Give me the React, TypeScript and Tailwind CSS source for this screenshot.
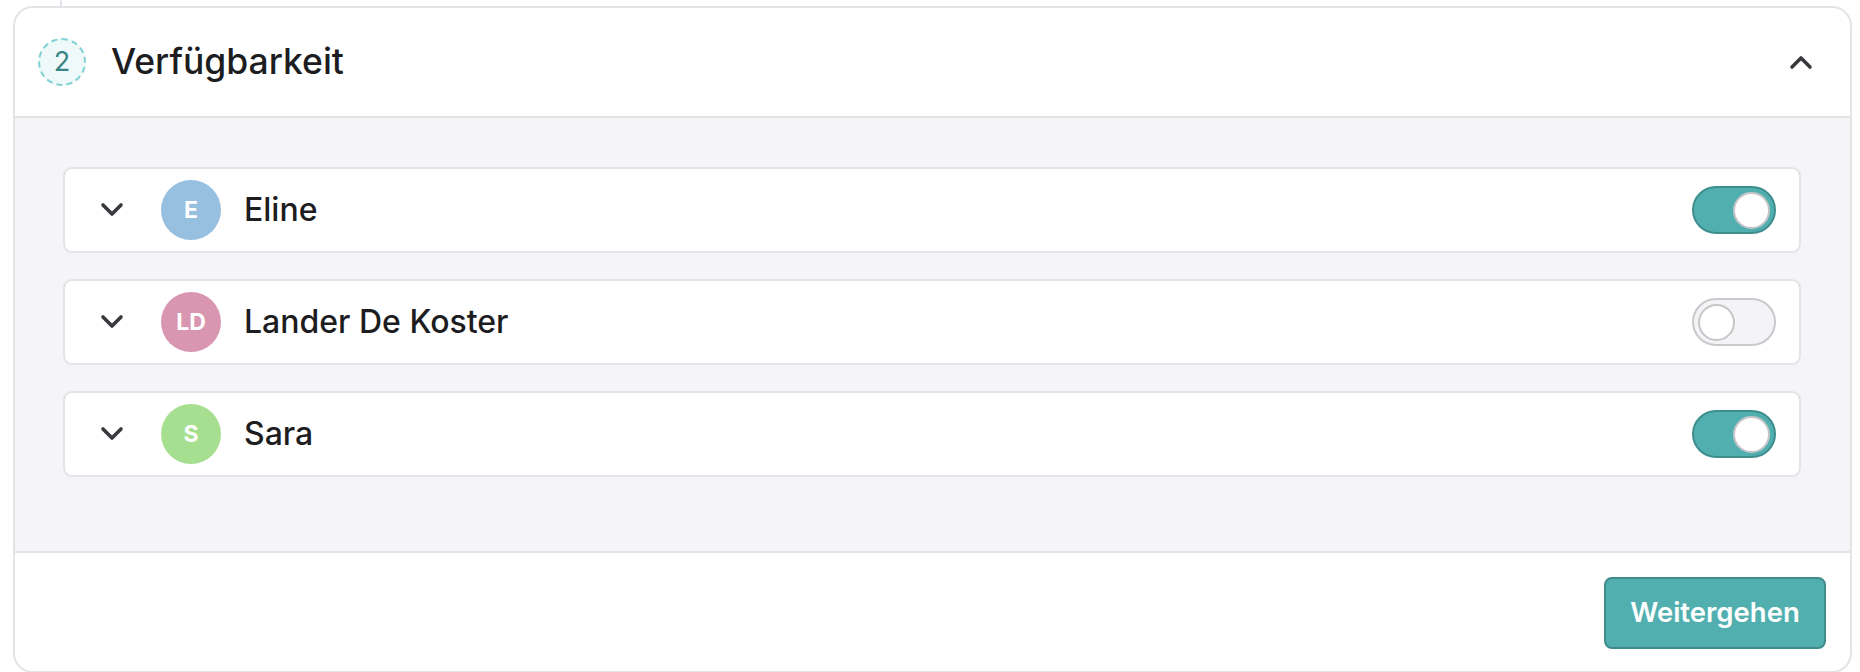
import { type ReactNode } from "react";

interface Member {
    name: string;
    initials: string;
    color: string;
    available: boolean;
}

const members: Member[] = [
    { name: "Eline", initials: "E", color: "bg-[#97bfe0]", available: true },
    { name: "Lander De Koster", initials: "LD", color: "bg-[#d996b1]", available: false },
    { name: "Sara", initials: "S", color: "bg-[#a6df8f]", available: true },
];

function Chevron({ up = false }: { up?: boolean }) {
    return (
        <svg width="24" height="16" viewBox="0 0 24 16" className="shrink-0" aria-hidden>
            <path
                d={up ? "M3 13 L12 4 L21 13" : "M3 3 L12 12 L21 3"}
                fill="none"
                stroke="#3a3a3e"
                strokeWidth="3.6"
                strokeLinecap="round"
                strokeLinejoin="round"
            />
        </svg>
    );
}

function Toggle({ on }: { on: boolean }) {
    return (
        <div
            className={`w-[84px] h-[48px] rounded-full border-2 flex items-center px-[4px] ${
                on ? "bg-[#52afaf] border-[#3f8e8e] justify-end" : "bg-[#f4f4f6] border-[#c9c9cd] justify-start"
            }`}>
            <div className="w-[37px] h-[37px] rounded-full bg-white border-2 border-[#c6c6c9]" />
        </div>
    );
}

function Avatar({ initials, color }: { initials: string; color: string }) {
    return (
        <div
            className={`w-[60px] h-[60px] rounded-full ${color} flex items-center justify-center text-white text-[23px] font-bold shrink-0`}>
            {initials}
        </div>
    );
}

function MemberRow({ m }: { m: Member }) {
    return (
        <div className="h-[86px] bg-white border-2 border-[#e4e4e8] rounded-[9px] flex items-center pl-[35px] pr-[23px]">
            <Chevron />
            <div className="ml-[37px]">
                <Avatar initials={m.initials} color={m.color} />
            </div>
            <span className="ml-[23px] text-[32px] font-medium text-[#1d1d1f] grow">{m.name}</span>
            <Toggle on={m.available} />
        </div>
    );
}

function StepBadge({ children }: { children: ReactNode }) {
    return (
        <div className="w-[48px] h-[48px] rounded-full border-2 border-dashed border-[#7fd1d6] bg-[#f0f9f9] flex items-center justify-center text-[27px] text-[#3b8587]">
            {children}
        </div>
    );
}

export default function App() {
    return (
        <div className="min-h-screen bg-white pl-[13px] pr-[8px] font-['Inter','Noto_Sans',sans-serif]">
            <div className="ml-[47px] w-[2px] h-[6px] bg-[#e4e4e8]" />
            <section className="border-2 border-[#e4e4e8] rounded-[20px] overflow-hidden">
                <header className="h-[110px] flex items-center pl-[23px] pr-[37px] border-b-2 border-[#e4e4e8]">
                    <StepBadge>2</StepBadge>
                    <h2 className="ml-[25px] text-[35.5px] font-medium text-[#1d1d1f] grow">Verfügbarkeit</h2>
                    <Chevron up />
                </header>
                <div className="bg-[#f5f5f7] pt-[49px] pb-[74px] pl-[48px] pr-[49px] flex flex-col gap-[26px] border-b-2 border-[#e4e4e8]">
                    {members.map((m) => (
                        <MemberRow key={m.name} m={m} />
                    ))}
                </div>
                <footer className="flex justify-end pt-[24px] pb-[22px] pr-[24px]">
                    <button className="w-[222px] h-[72px] rounded-[8px] bg-[#52afb0] border-2 border-[#3f8c8d] text-white text-[27.5px] font-semibold">
                        Weitergehen
                    </button>
                </footer>
            </section>
        </div>
    );
}
